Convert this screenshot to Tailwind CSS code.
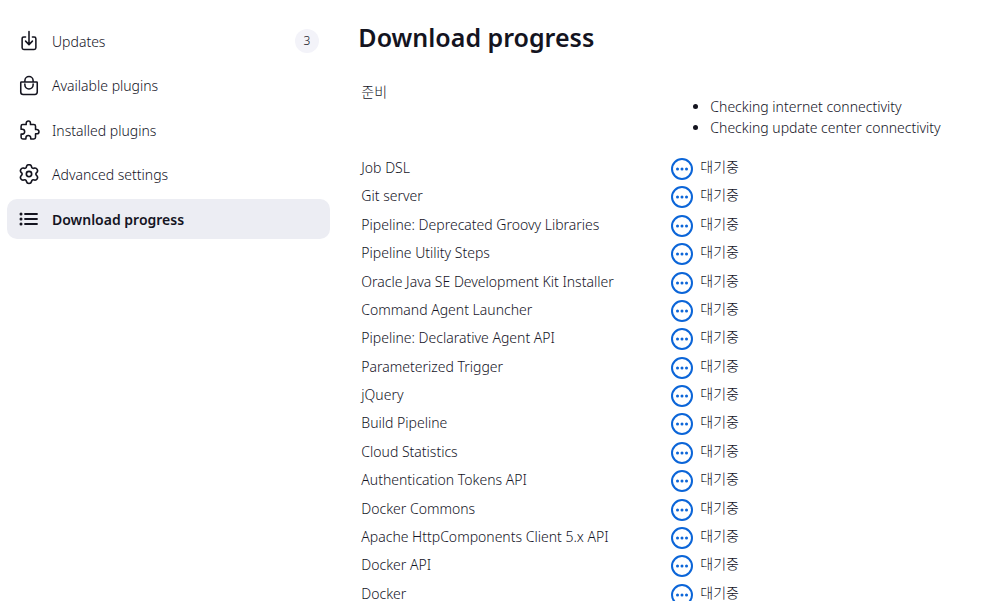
<!DOCTYPE html>
<html lang="ko">
<head>
<meta charset="utf-8">
<meta name="viewport" content="width=device-width, initial-scale=1">
<title>Download progress</title>
<script src="https://cdn.jsdelivr.net/npm/@tailwindcss/browser@4"></script>
</head>
<body class="h-screen overflow-hidden bg-white font-['Noto_Sans','Noto_Sans_CJK_KR',sans-serif] text-sm/[21px] font-[350] text-[#14141f]">
<div class="flex items-start">
  <nav class="w-1/3 shrink-0 pt-[21px] pl-[7px]" aria-label="Plugin manager">
    <ul class="flex h-[218px] w-[323px] max-w-full flex-col justify-between">
      <li><a href="#updates" class="flex h-10 items-center gap-3 rounded-[10px] px-[11px]">
        <svg class="size-[22px]" viewBox="0 12 512 512" fill="none" stroke="currentColor" stroke-width="36" stroke-linecap="round" stroke-linejoin="round"><path d="M336 176h40a40 40 0 0140 40v208a40 40 0 01-40 40H136a40 40 0 01-40-40V216a40 40 0 0140-40h40M176 272l80 80 80-80M256 48v288"/></svg>
        <span class="grow">Updates</span>
        <span class="flex size-6 items-center justify-center rounded-full bg-[#f3f3f9] text-xs">3</span></a></li>
      <li><a href="#available" class="flex h-10 items-center gap-3 rounded-[10px] px-[11px]">
        <svg class="size-[22px]" viewBox="0 12 512 512" fill="none" stroke="currentColor" stroke-width="36" stroke-linecap="round" stroke-linejoin="round"><path d="M80 176a16 16 0 00-16 16v216c0 30.24 25.76 56 56 56h272c30.24 0 56-24.51 56-54.75V192a16 16 0 00-16-16zM160 176v-32a96 96 0 0196-96 96 96 0 0196 96v32M160 224v16a96 96 0 0096 96 96 96 0 0096-96v-16"/></svg>
        <span>Available plugins</span></a></li>
      <li><a href="#installed" class="flex h-10 items-center gap-3 rounded-[10px] px-[11px]">
        <svg class="size-[22px]" viewBox="-24 0 512 512" fill="none" stroke="currentColor" stroke-width="36" stroke-linejoin="round"><path d="M413.66 246.1H386a2 2 0 01-2-2v-77.24A38.86 38.86 0 00345.14 128H267.9a2 2 0 01-2-2V98.34c0-27.14-21.5-49.86-48.64-50.33a49.53 49.53 0 00-50.4 49.51V126a2 2 0 01-2 2H87.62A39.74 39.74 0 0048 167.62V238a2 2 0 002 2h26.91c29.37 0 53.68 25.48 54.09 54.85.42 29.87-23.51 57.15-53.29 57.15H50a2 2 0 00-2 2v70.38A39.74 39.74 0 0087.62 464H158a2 2 0 002-2v-20.93c0-30.28 24.75-56.35 55-57.06 30.1-.7 57 20.31 57 50.28V462a2 2 0 002 2h71.14A38.86 38.86 0 00384 425.14v-78a2 2 0 012-2h28.48c27.63 0 49.52-22.67 49.52-50.4s-23.2-48.64-50.34-48.64z"/></svg>
        <span>Installed plugins</span></a></li>
      <li><a href="#advanced" class="flex h-10 items-center gap-3 rounded-[10px] px-[11px]">
        <svg class="size-[22px]" viewBox="-1 0 24 24" fill="none" stroke="currentColor" stroke-width="1.8" stroke-linejoin="round"><circle cx="11" cy="11" r="2.9"/><path d="M8.2 2.87A2.9 2.9 0 0113.8 2.87 1.9 1.9 0 0016.64 4.51 2.9 2.9 0 0119.44 9.36 1.9 1.9 0 0019.44 12.64 2.9 2.9 0 0116.64 17.49 1.9 1.9 0 0013.8 19.13 2.9 2.9 0 018.2 19.13 1.9 1.9 0 005.36 17.49 2.9 2.9 0 012.56 12.64 1.9 1.9 0 002.56 9.36 2.9 2.9 0 015.36 4.51 1.9 1.9 0 008.2 2.87z"/></svg>
        <span>Advanced settings</span></a></li>
      <li><a href="#progress" aria-current="page" class="flex h-10 items-center gap-3 rounded-[10px] bg-[#ecedf3] px-[11px] font-semibold">
        <svg class="size-[22px]" viewBox="0 0 22 22" fill="none" stroke="currentColor" stroke-width="1.8" stroke-linecap="round"><path d="M7 6h12M7 11h12M7 16h12"/><path stroke-width="3" d="M3 6h.01M3 11h.01M3 16h.01"/></svg>
        <span>Download progress</span></a></li>
    </ul>
  </nav>
  <main class="min-w-0 grow pt-[19px] pr-6 pl-6">
    <h1 class="text-[25px]/9 font-semibold">Download progress</h1>
    <table class="mt-[23px] w-full border-collapse text-left">
      <tbody class="align-top">
        <tr class="h-[76px]"><th scope="row" class="w-[311px] pt-[3px] pl-[3px] font-light">준비</th>
          <td><ul class="list-disc pt-[18px] pl-[41px]"><li>Checking internet connectivity</li><li>Checking update center connectivity</li></ul></td></tr>
      </tbody>
    </table>
    <table class="h-[454px] w-full border-collapse text-left">
      <tbody id="jobs" class="align-top"></tbody>
    </table>
  </main>
</div>
<template id="job">
  <tr><th scope="row" class="w-[311px] pt-[3px] pl-[3px] font-[350]"></th>
    <td class="pt-[2px] pl-px"><span class="flex gap-[6px]">
      <svg class="mt-px size-6 text-[#0b65d8]" viewBox="0 0 24 24" fill="none" stroke="currentColor" stroke-width="2"><circle cx="12" cy="12" r="10"/><path stroke-width="3" stroke-linecap="round" d="M7.500 12h.01M12 12h.01M16.500 12h.01"/></svg>
      <span class="font-light">대기중</span></span></td></tr>
</template>
<script>
const names = ["Job DSL", "Git server", "Pipeline: Deprecated Groovy Libraries", "Pipeline Utility Steps",
  "Oracle Java SE Development Kit Installer", "Command Agent Launcher", "Pipeline: Declarative Agent API",
  "Parameterized Trigger", "jQuery", "Build Pipeline", "Cloud Statistics", "Authentication Tokens API",
  "Docker Commons", "Apache HttpComponents Client 5.x API", "Docker API", "Docker"];
const template = document.getElementById("job");
for (const name of names) {
  const row = template.content.cloneNode(true);
  row.querySelector("th").textContent = name;
  document.getElementById("jobs").append(row);
}
</script>
</body>
</html>
